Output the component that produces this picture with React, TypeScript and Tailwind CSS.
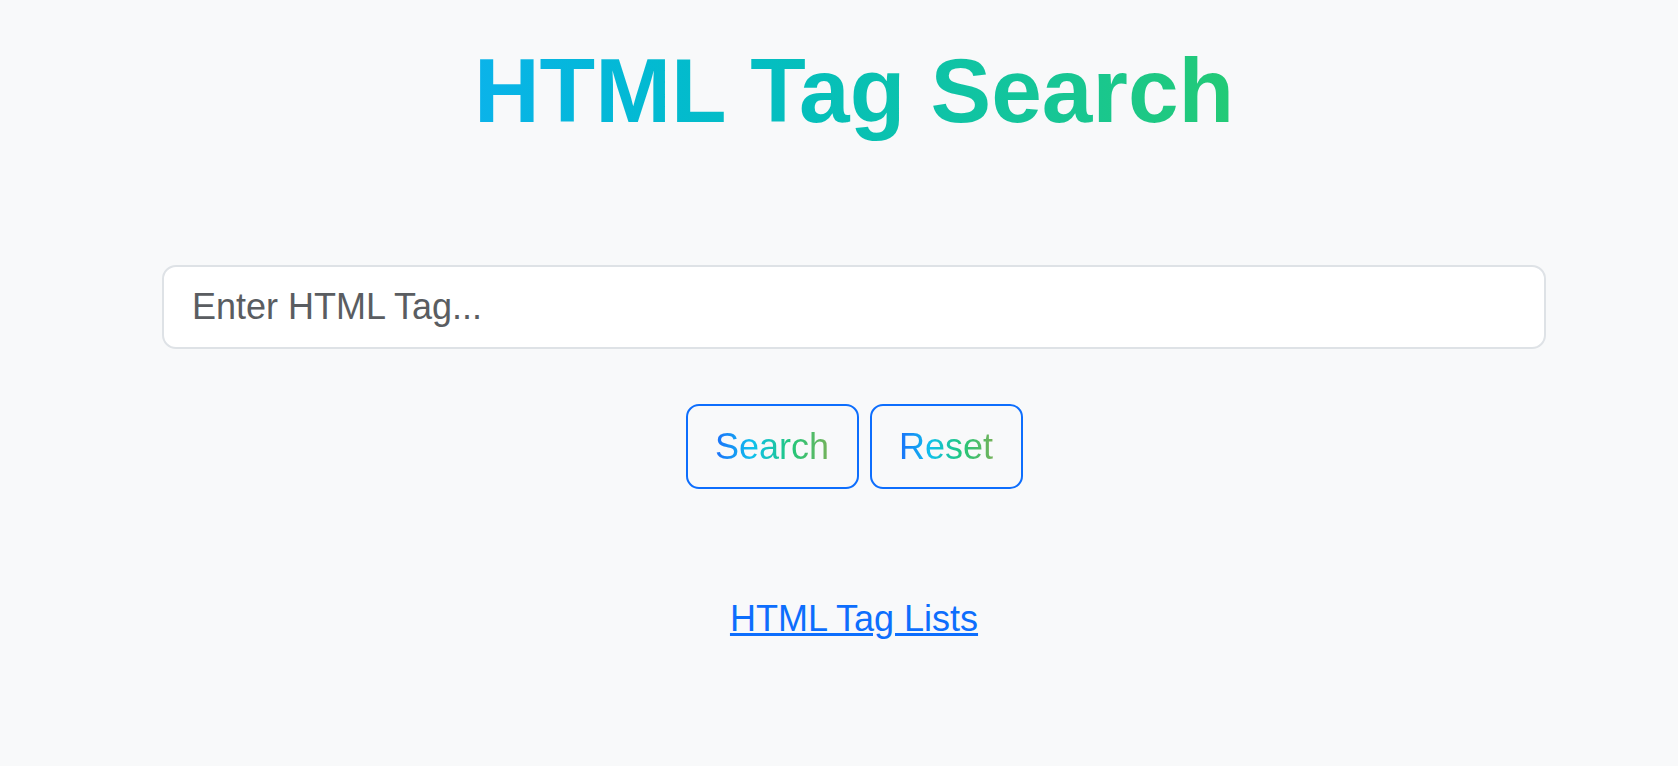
export default function App() {
  return (
    <main className="min-h-screen bg-[#f8f9fa] pl-[30px] font-['Liberation_Sans',Arial,sans-serif]">
      <div className="flex flex-col items-center">
        {/* Titre en dégradé */}
        <h1 className="mt-[36px] text-[91px] leading-[1.2] font-bold bg-gradient-to-r from-[#0bb3ea] to-[#23ca75] bg-clip-text text-transparent">
          HTML Tag Search
        </h1>

        {/* Champ de recherche */}
        <input
          type="text"
          placeholder="Enter HTML Tag..."
          className="mt-[120px] w-[1384px] h-[84px] rounded-[14px] border-2 border-[#dee2e6] bg-white px-[28px] text-[36px] text-[#212529] placeholder:text-[#5a5d61] outline-none"
        />

        {/* Boutons */}
        <div className="mt-[55px] flex gap-[11px]">
          <button className="w-[173px] h-[85px] rounded-[13px] border-2 border-[#0d6efd] text-[36px] flex items-center justify-center">
            <span className="bg-[linear-gradient(90deg,#1a6ffb,#0fc1ec,#22c77a,#74b25a)] bg-clip-text text-transparent">Search</span>
          </button>
          <button className="w-[153px] h-[85px] rounded-[13px] border-2 border-[#0d6efd] text-[36px] flex items-center justify-center">
            <span className="bg-[linear-gradient(90deg,#1a6ffb,#0fc1ec,#22c77a,#74b25a)] bg-clip-text text-transparent">Reset</span>
          </button>
        </div>

        {/* Lien */}
        <a href="#" className="mt-[112px] text-[36px] leading-none text-[#0d6efd] underline">
          HTML Tag Lists
        </a>
      </div>
    </main>
  )
}
